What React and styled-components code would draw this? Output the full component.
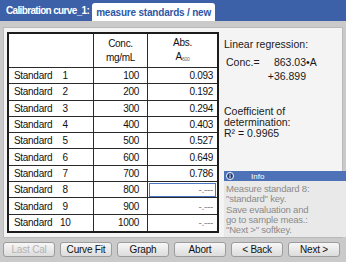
import styled, { createGlobalStyle } from "styled-components";

const GlobalStyle = createGlobalStyle`
  html, body {
    margin: 0;
    padding: 0;
    background: #c9c9c9;
  }
  body {
    font-family: "Liberation Sans", Arial, sans-serif;
    -webkit-font-smoothing: antialiased;
  }
`;

const Screen = styled.div`
  width: 346px;
  height: 262px;
  display: flex;
  flex-direction: column;
  background: #cacaca;
  overflow: hidden;
`;

const Header = styled.div`
  height: 21px;
  background: #3c61a9;
  display: flex;
  align-items: flex-end;
  padding-left: 6px;
  flex-shrink: 0;
`;

const Title = styled.div`
  align-self: center;
  color: #fff;
  font-weight: bold;
  font-size: 10px;
  letter-spacing: -0.65px;
  margin-right: 3px;
`;

const Tab = styled.div`
  height: 18px;
  display: flex;
  align-items: center;
  background: #fff;
  border-radius: 3px 3px 0 0;
  padding: 0 4px;
  color: #2d57a6;
  font-weight: bold;
  font-size: 10px;
  letter-spacing: -0.2px;
`;

const Panel = styled.div`
  margin: 6px 3px 0;
  height: 211px;
  box-sizing: border-box;
  background: #f4f4f4;
  border: 1px solid #b9b9b9;
  display: grid;
  grid-template-columns: 212px 1fr;
  column-gap: 5px;
  padding: 4px 0 0 3px;
`;

const Table = styled.div`
  display: grid;
  grid-template-columns: 85px 54px 1fr;
  grid-template-rows: 34px repeat(10, 16.3px);
  border: 2px solid #1c1c1c;
  background: #fff;
  align-self: start;
  font-size: 10px;
  color: #111;
`;

const Cell = styled.div`
  box-sizing: border-box;
  border-right: ${(p) => (p.$last ? "none" : "1px solid #2a2a2a")};
  border-bottom: ${(p) => (p.$bottom ? "none" : "1px solid #2a2a2a")};
  display: flex;
  align-items: center;
  justify-content: ${(p) => p.$align || "flex-start"};
  padding: 0 ${(p) => p.$pr ?? 5}px 0 5px;
  background: #fff;
  letter-spacing: -0.3px;
`;

const HeadCell = styled(Cell)`
  flex-direction: column;
  justify-content: center;
  align-items: center;
  line-height: 14px;
  padding: 0;
`;

const AbsCell = styled(Cell)`
  color: ${(p) => (p.$pending ? "#8a8a8a" : "#111")};
  outline: ${(p) => (p.$active ? "1px solid #4a74c4" : "none")};
  outline-offset: -2px;
`;

const Num = styled.span`
  display: inline-block;
  width: 16px;
  margin-left: 5px;
  text-align: center;
`;

const Sub = styled.sub`
  font-size: 5px;
  color: #666;
  vertical-align: -1px;
`;

const Side = styled.div`
  display: flex;
  flex-direction: column;
  font-size: 10.5px;
  color: #1a1a1a;
  min-width: 0;
`;

const Line = styled.div`
  line-height: 11px;
  margin-top: ${(p) => p.$mt || 0}px;
  white-space: nowrap;
`;

const Formula = styled.div`
  display: grid;
  grid-template-columns: 38px 42px auto;
  line-height: 14px;
  margin-top: 5px;
  margin-left: 2px;
  white-space: nowrap;
`;

const Right = styled.span`
  text-align: right;
`;

const InfoBox = styled.div`
  margin-top: auto;
  margin-right: -4px;
  height: 66px;
  background: #e9e9e9;
  display: flex;
  flex-direction: column;
`;

const InfoHead = styled.div`
  height: 10px;
  flex-shrink: 0;
  background: #4e72b8;
  display: flex;
  align-items: center;
  color: #fff;
  font-size: 8px;
  padding-left: 2px;
  gap: 17px;
`;

const InfoText = styled.div`
  color: #8b8b8b;
  font-size: 9.5px;
  line-height: 10.3px;
  padding: 3px 0 0 2px;
  letter-spacing: -0.2px;
`;

const Footer = styled.div`
  flex: 1;
  display: flex;
  gap: 5px;
  padding: 4px 3px 0;
`;

const Button = styled.button`
  width: 52px;
  height: 15px;
  padding: 0;
  border: 1px solid #9c9c9c;
  border-radius: 3px;
  background: linear-gradient(#f7f7f7, #dcdcdc);
  font-family: "Liberation Sans", Arial, sans-serif;
  font-size: 10px;
  letter-spacing: -0.2px;
  color: ${(p) => (p.disabled ? "#b3b3b3" : "#111")};
`;

const rows = [
  ["1", "100", "0.093"],
  ["2", "200", "0.192"],
  ["3", "300", "0.294"],
  ["4", "400", "0.403"],
  ["5", "500", "0.527"],
  ["6", "600", "0.649"],
  ["7", "700", "0.786"],
  ["8", "800", null],
  ["9", "900", null],
  ["10", "1000", null],
];

const InfoIcon = () => (
  <svg width="8" height="8" viewBox="0 0 8 8">
    <circle cx="4" cy="4" r="3.5" fill="#1f3a78" stroke="#fff" strokeWidth="1" />
    <rect x="3.5" y="1.8" width="1" height="1" fill="#fff" />
    <rect x="3.5" y="3.3" width="1" height="3" fill="#fff" />
  </svg>
);

export default function App() {
  return (
    <>
      <GlobalStyle />
      <Screen>
        <Header>
          <Title>Calibration curve_1:</Title>
          <Tab>measure standards / new</Tab>
        </Header>
        <Panel>
          <Table>
            <HeadCell />
            <HeadCell>
              <span>Conc.</span>
              <span>mg/mL</span>
            </HeadCell>
            <HeadCell $last>
              <span>Abs.</span>
              <span>
                A<Sub>600</Sub>
              </span>
            </HeadCell>
            {rows.map(([n, conc, abs], i) => {
              const bottom = i === rows.length - 1;
              return [
                <Cell key={`s${n}`} $bottom={bottom}>
                  Standard<Num>{n}</Num>
                </Cell>,
                <Cell key={`c${n}`} $bottom={bottom} $align="flex-end" $pr={8}>
                  {conc}
                </Cell>,
                <AbsCell
                  key={`a${n}`}
                  $bottom={bottom}
                  $last
                  $align="flex-end"
                  $pr={4}
                  $pending={!abs}
                  $active={n === "8"}
                >
                  {abs || "-.---"}
                </AbsCell>,
              ];
            })}
          </Table>
          <Side>
            <Line $mt={7}>Linear regression:</Line>
            <Formula>
              <span>Conc.=</span>
              <Right>863.03</Right>
              <span>•A</span>
              <span />
              <Right>+36.899</Right>
              <span />
            </Formula>
            <Line $mt={23}>Coefficient of</Line>
            <Line>determination:</Line>
            <Line>R² = 0.9965</Line>
            <InfoBox>
              <InfoHead>
                <InfoIcon />
                <span>Info</span>
              </InfoHead>
              <InfoText>
                Measure standard 8:
                <br />
                "standard" key.
                <br />
                Save evaluation and
                <br />
                go to sample meas.:
                <br />
                "Next &gt;" softkey.
              </InfoText>
            </InfoBox>
          </Side>
        </Panel>
        <Footer>
          <Button disabled>Last Cal</Button>
          <Button>Curve Fit</Button>
          <Button>Graph</Button>
          <Button>Abort</Button>
          <Button>&lt; Back</Button>
          <Button>Next &gt;</Button>
        </Footer>
      </Screen>
    </>
  );
}
